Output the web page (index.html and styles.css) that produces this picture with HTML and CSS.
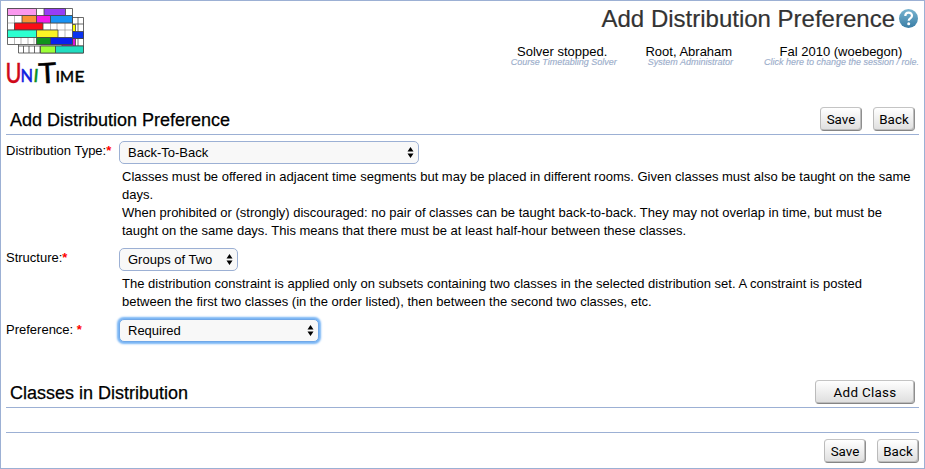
FILE: index.html
```html
<!DOCTYPE html>
<html lang="en">
<head>
<meta charset="utf-8">
<title>Add Distribution Preference</title>
<link rel="stylesheet" href="styles.css">
</head>
<body>
<div class="page">
  <header class="top">
    <svg class="logo" width="82" height="90" viewBox="0 0 82 90">
      <g stroke="#444" stroke-width=".8">
        <path fill="#fff" d="M12.500 10.500h65v35.500h-65z"/>
        <path fill="none" d="M66.500 10v36M72 10v36M12.500 39h65M17.500 39v7M23 39v7M28.500 39v7M34 39v7M60 17h17.500M60 31.500h17.500"/>
        <path fill="#ff0" d="M60 17.500h9.500v7H60z"/><path fill="#0a32f0" d="M60 24.500h17.500v7H60z"/>
        <path fill="#e010d8" d="M56 31.500h13.500V39H56z"/><path fill="#9cff38" d="M34.500 39h15v7h-15z"/>
        <path fill="#20dcc0" d="M49.500 39h28v7h-28z"/>
        <path fill="#fff" d="M1.500 1.500h65v36h-65z"/>
        <path fill="none" stroke="#888" stroke-width=".6" d="M8.500 8.500v29M15 30.500v7M22 30.500v7M28 30.500v7M44.500 16v7M51 16v14M59 16v14M1.500 8.500h65M1.500 16h65M1.500 23h65M1.500 30.500h65"/>
        <path fill="#fa98ee" d="M1.500 1.500h29v7h-29z"/><path fill="#963ef5" d="M38 1.500h21.500v7H38z"/>
        <path fill="#f99236" d="M16 8.500h14.500V16H16z"/><path fill="#f21be9" d="M30.500 8.500h14V16h-14z"/>
        <path fill="#1893f5" d="M44.500 8.500h22V16h-22z"/><path fill="#fb0c16" d="M8.500 16H37v7H8.500z"/>
        <path fill="#2bffd0" d="M1.500 23h29v7.500h-29z"/><path fill="#fbf425" d="M30.500 23H52v7.500H30.500z"/>
        <path fill="#12931c" d="M30.500 30.500h14v7h-14z"/><path fill="#0920ee" d="M44.500 30.500h22v7h-22z"/>
      </g>
      <g class="wordmark">
        <text x="-.5" y="75.500" font-size="26" textLength="16" lengthAdjust="spacingAndGlyphs" fill="#cf0818" stroke="#cf0818">U</text>
        <text x="14.500" y="75" font-size="16.500" textLength="12.500" lengthAdjust="spacingAndGlyphs" fill="#1020e0" stroke="#1020e0">N</text>
        <text x="27.500" y="75.500" font-size="18" fill="#079020" stroke="#079020" transform="skewX(-5) translate(6 0)">I</text>
        <text x="32.500" y="76" font-size="28" textLength="18" lengthAdjust="spacingAndGlyphs" stroke="#000" transform="rotate(-3 41 66)">T</text>
        <text x="49.500" y="74.500" font-size="16" stroke="#000">I</text>
        <text x="54" y="74.500" font-size="16" textLength="14" lengthAdjust="spacingAndGlyphs" stroke="#000">M</text>
        <text x="68.500" y="74.500" font-size="16" textLength="10" lengthAdjust="spacingAndGlyphs" stroke="#000">E</text>
      </g>
    </svg>
    <div class="heading">
      <div class="title"><span>Add Distribution Preference</span>
        <svg width="20" height="22" viewBox="0 0 20 22">
          <defs><linearGradient id="help" x2="0" y2="1"><stop stop-color="#79b5d1"/><stop offset="1" stop-color="#397da5"/></linearGradient></defs>
          <circle cx="9.500" cy="10.500" r="9.500" fill="url(#help)"/>
          <path d="M6.300 8C6.300 3.700 13 3.600 13 7.800c0 2.700-3.300 2.600-3.300 5" fill="none" stroke="#fff" stroke-width="2.200"/><circle cx="9.700" cy="15.700" r="1.500" fill="#fff"/>
        </svg>
      </div>
      <div class="info">
        <div class="item solver"><b>Solver stopped.</b><i>Course Timetabling Solver</i></div>
        <div class="item user"><b>Root, Abraham</b><i>System Administrator</i></div>
        <div class="item session"><b>Fal 2010 (woebegon)</b><i>Click here to change the session / role.</i></div>
      </div>
    </div>
  </header>
  <main>
    <div class="section first"><h2>Add Distribution Preference</h2><div class="actions"><button>Save</button><button>Back</button></div></div>
    <div class="row type">
      <div class="label">Distribution Type:<em>*</em></div>
      <div class="field">
        <div class="select wide">Back-To-Back<svg width="7" height="11"><path d="M3.500 0 6.500 4.500h-6zM.5 6.500h6L3.500 11z"/></svg></div>
        <p>Classes must be offered in adjacent time segments but may be placed in different rooms. Given classes must also be taught on the same<br>days.<br>When prohibited or (strongly) discouraged: no pair of classes can be taught back-to-back. They may not overlap in time, but must be<br>taught on the same days. This means that there must be at least half-hour between these classes.</p>
      </div>
    </div>
    <div class="row structure">
      <div class="label">Structure:<em>*</em></div>
      <div class="field">
        <div class="select narrow">Groups of Two<svg width="7" height="11"><path d="M3.500 0 6.500 4.500h-6zM.5 6.500h6L3.500 11z"/></svg></div>
        <p>The distribution constraint is applied only on subsets containing two classes in the selected distribution set. A constraint is posted<br>between the first two classes (in the order listed), then between the second two classes, etc.</p>
      </div>
    </div>
    <div class="row preference">
      <div class="label">Preference: <em>*</em></div>
      <div class="field"><div class="select medium focus">Required<svg width="7" height="11"><path d="M3.500 0 6.500 4.500h-6zM.5 6.500h6L3.500 11z"/></svg></div></div>
    </div>
    <div class="section second"><h2>Classes in Distribution</h2><div class="actions"><button class="add">Add Class</button></div></div>
    <div class="footer"><div class="actions"><button>Save</button><button>Back</button></div></div>
  </main>
</div>
</body>
</html>
```
FILE: styles.css
```css
* { box-sizing: border-box; }
body { margin: 0; background: #fff; color: #000; font: 13px/18px "Liberation Sans", Arial, sans-serif; }
.page { height: 469px; border: 1px solid #9cb0d4; padding: 0 5px; overflow: hidden; }
.top { display: flex; justify-content: space-between; height: 101px; padding-top: 6px; }
.logo { display: block; overflow: visible; }
.wordmark { font-family: Lato, sans-serif; stroke-width: .5px; }
.heading { display: flex; flex-direction: column; align-items: flex-end; }
.title { display: flex; align-items: center; gap: 4px; height: 24px; font-size: 24px; line-height: 24px; color: #333; white-space: nowrap; -webkit-text-stroke: .2px #333; }
.info { display: flex; margin-top: 14px; gap: 31px; text-align: center; white-space: nowrap; }
.item b { display: block; font-weight: 400; font-size: 13px; line-height: 14px; }
.solver b, .user b { margin-left: -3px; }
.session b { margin-left: -1px; }
.item i { display: block; font-size: 9px; line-height: 9px; margin-top: -1px; color: #9caecb; -webkit-text-stroke: .15px #9caecb; }
.section { display: flex; justify-content: space-between; border-bottom: 1px solid #9cb0d4; padding: 0 4px; }
.first { height: 33px; }
.second { height: 34px; }
h2 { margin: 0; font-size: 18px; line-height: 22px; font-weight: 400; white-space: nowrap; -webkit-text-stroke: .25px #000; }
.first h2 { padding-top: 7px; }
.second h2 { padding-top: 8px; }
.actions { display: flex; gap: 11px; }
.first .actions { padding-top: 5px; }
.second .actions { padding-top: 6px; }
button { width: 42px; height: 24px; padding: 2px 0 0; border: 1px solid; border-color: #c4c4c4 #8e8e8e #858585 #bbb; border-radius: 4px; background: linear-gradient(#fff, #dedede); box-shadow: inset -1px -1px 0 #bdbdbd; font: 13.4px/20px Roboto, sans-serif; color: #000; }
.add { width: 100px; letter-spacing: .3px; }
.row { display: flex; }
.type { height: 107px; padding-top: 6px; }
.structure { height: 72px; padding-top: 6px; }
.preference { height: 60px; padding-top: 5px; }
.label { width: 113px; flex: none; line-height: 20px; }
.preference .label { line-height: 22px; }
em { color: #f00; font-style: normal; font-weight: 700; }
.field { white-space: nowrap; }
.select { display: flex; align-items: center; justify-content: space-between; height: 23px; border: 1px solid #9cb0d4; border-radius: 5px; background: #f8f8f8; padding: 0 4px 0 8px; }
.wide { width: 300px; }
.narrow { width: 119px; }
.medium { width: 200px; }
.focus { border-color: #70a8e8; box-shadow: 0 0 2px 1.500px #78b5f5; }
p { margin: 4px 0 0 3px; }
.footer { display: flex; justify-content: flex-end; margin-top: 24px; border-top: 1px solid #9cb0d4; padding-top: 6px; }
```
